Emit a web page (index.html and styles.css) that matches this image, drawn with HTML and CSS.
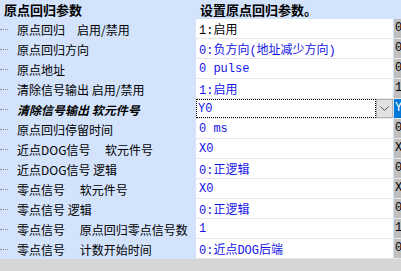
FILE: index.html
```html
<!DOCTYPE html>
<html>
<head>
  <title>原点回归参数</title>
  <link rel="stylesheet" href="styles.css">
</head>
<body>
  <div class="grid">
    <div class="head name-head">原点回归参数</div>
    <div class="head value-head">设置原点回归参数。</div>

    <div class="name"><span class="dots"></span>原点回归　启用/禁用</div>
    <div class="value black">1:启用</div>
    <div class="extra">0</div>

    <div class="name"><span class="dots"></span>原点回归方向</div>
    <div class="value">0:负方向(地址减少方向)</div>
    <div class="extra">0</div>

    <div class="name"><span class="dots"></span>原点地址</div>
    <div class="value">0 pulse</div>
    <div class="extra">0</div>

    <div class="name"><span class="dots"></span>清除信号输出 启用/禁用</div>
    <div class="value">1:启用</div>
    <div class="extra">1</div>

    <div class="name active"><span class="dots"></span>清除信号输出 软元件号</div>
    <div class="value combo">
      <span class="combo-text">Y0</span>
      <span class="combo-btn">
        <svg width="9" height="5" viewBox="0 0 9 5"><path d="M0.5 0.5 L4.5 4.5 L8.5 0.5" fill="none" stroke="#555" stroke-width="1"/></svg>
      </span>
    </div>
    <div class="extra selected">Y</div>

    <div class="name"><span class="dots"></span>原点回归停留时间</div>
    <div class="value">0 ms</div>
    <div class="extra">0</div>

    <div class="name"><span class="dots"></span>近点DOG信号　 软元件号</div>
    <div class="value">X0</div>
    <div class="extra">X</div>

    <div class="name"><span class="dots"></span>近点DOG信号 逻辑</div>
    <div class="value">0:正逻辑</div>
    <div class="extra">0</div>

    <div class="name"><span class="dots"></span>零点信号　 软元件号</div>
    <div class="value">X0</div>
    <div class="extra">X</div>

    <div class="name"><span class="dots"></span>零点信号 逻辑</div>
    <div class="value">0:正逻辑</div>
    <div class="extra">0</div>

    <div class="name"><span class="dots"></span>零点信号　 原点回归零点信号数</div>
    <div class="value">1</div>
    <div class="extra">1</div>

    <div class="name"><span class="dots"></span>零点信号　 计数开始时间</div>
    <div class="value">0:近点DOG后端</div>
    <div class="extra">0</div>
  </div>
  <div class="footer"></div>
</body>
</html>
```

FILE: styles.css
```css
/* page */
body {
  margin: 0;
  background-color: #d6d6d6;
  font-family: "Noto Sans CJK SC", sans-serif;
  font-size: 12px;
  overflow: hidden;
}

/* the property grid */
.grid {
  display: grid;
  grid-template-columns: 196px 197px 1fr;
  grid-auto-rows: 20px;
  grid-template-rows: 19px;
  background-color: #d3e3fb;
}

.head {
  font-weight: bold;
  font-size: 13px;
  line-height: 19px;
  white-space: nowrap;
  background-color: #d3e3fb;
}

.name-head {
  padding-left: 4px;
}

.value-head {
  grid-column: 2 / 4;
  padding-left: 4px;
}

/* left column labels */
.name {
  display: flex;
  align-items: center;
  white-space: nowrap;
  overflow: hidden;
  color: #000;
  background-color: #d3e3fb;
}

.dots {
  width: 8px;
  margin-right: 9px;
  border-top: 1px dotted #8a8a8a;
}

.name.active {
  font-weight: bold;
  font-style: italic;
}

/* middle column values */
.value {
  display: flex;
  align-items: center;
  padding-left: 3px;
  background-color: #fff;
  border-bottom: 1px solid #e6e6e6;
  color: #1414e6;
  font-family: "Liberation Mono", "Noto Sans CJK SC", monospace;
  white-space: nowrap;
  overflow: hidden;
}

.value.black {
  color: #000;
}

.combo {
  padding-left: 0;
  align-items: stretch;
}

.combo-text {
  flex: 1;
  display: flex;
  align-items: center;
  padding-left: 1px;
  border: 1px dotted #000;
  border-bottom-style: dotted;
}

.combo-btn {
  width: 15px;
  display: flex;
  align-items: center;
  justify-content: center;
  background-color: #e1e1e1;
  border: 1px solid #b4b4b4;
}

/* right column, cut off by the window */
.extra {
  margin-left: 1px;
  padding-left: 1px;
  background-color: #bfbfbf;
  border-bottom: 1px solid #e8e8e8;
  font-family: "Liberation Mono", monospace;
  line-height: 19px;
  overflow: hidden;
}

.extra.selected {
  background-color: #0078d7;
  color: #fff;
}

.footer {
  height: 12px;
  background-color: #d6d6d6;
}
```
